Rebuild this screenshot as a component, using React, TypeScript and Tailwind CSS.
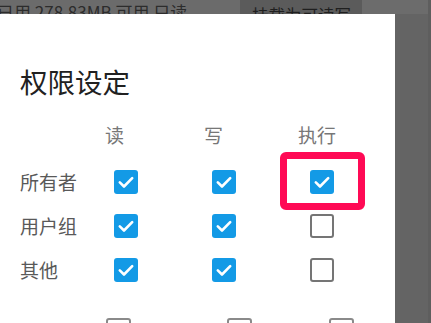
import React from 'react';

const font = { fontFamily: '"Noto Sans CJK SC", Roboto, "Noto Sans", sans-serif' };

function Check({ on }: { on: boolean }) {
  if (!on) {
    return <span className="block h-[24px] w-[24px] rounded-[3px] border-2 border-[#757575] bg-white" />;
  }
  return (
    <span className="flex h-[24px] w-[24px] items-center justify-center rounded-[3px] bg-[#139ae6]">
      <svg width="24" height="24" viewBox="0 0 24 24" fill="none">
        <path d="M5.8 12.4l4.2 4.1 8.2-8.4" stroke="#fff" strokeWidth="2.6" strokeLinecap="round" strokeLinejoin="round" />
      </svg>
    </span>
  );
}

const rows: { label: string; perms: boolean[] }[] = [
  { label: '所有者', perms: [true, true, true] },
  { label: '用户组', perms: [true, true, false] },
  { label: '其他', perms: [true, true, false] },
];

export default function App() {
  return (
    <div className="flex h-[323px] w-[431px] flex-col overflow-hidden bg-[#656565]" style={font}>
      {/* dimmed page behind the dialog */}
      <div className="flex h-[14px] shrink-0 overflow-hidden">
        <div className="flex w-[240px] bg-[#6b6b6b] pt-[2px]">
          <span className="-ml-[3px] whitespace-nowrap text-[17px] leading-[20px] text-[#2c2c2c]">已用 278.83MB 可用 只读</span>
        </div>
        <div className="w-[122px] bg-[#5b5b5b] pl-[12px] pt-[3px]">
          <span className="whitespace-nowrap text-[16.5px] leading-[20px] text-[#1f1f1f]">挂载为可读写</span>
        </div>
        <div className="w-[66px] bg-[#6c6c6c]" />
        <div className="flex-1 bg-[#5e5e5e]" />
      </div>

      <div className="flex flex-1">
        {/* dialog */}
        <div className="w-[395px] bg-white pl-[20px] pt-[50px]">
          <h2 className="text-[27.5px] leading-[34px] font-normal text-[#212121]">权限设定</h2>

          <div className="mt-[13px] grid grid-cols-[57px_98px_98px_98px]">
            <div className="h-[49px]" />
            <div className="flex h-[49px] items-center pl-[28px] text-[19px] text-[#777777]">读</div>
            <div className="flex h-[49px] items-center pl-[29px] text-[19px] text-[#777777]">写</div>
            <div className="flex h-[49px] items-center pl-[25px] text-[19px] text-[#777777]">执行</div>

            {rows.map((r, ri) => (
              <React.Fragment key={r.label}>
                <div className="flex h-[44px] items-center whitespace-nowrap text-[19px] text-[#595959]">{r.label}</div>
                {r.perms.map((p, pi) => (
                  <div key={pi} className="relative flex h-[44px] items-center justify-center">
                    <Check on={p} />
                    {ri === 0 && pi === 2 && (
                      <span className="absolute left-[7px] top-[-8px] h-[58px] w-[85px] rounded-[6px] border-[7px] border-[#ff0a55]" />
                    )}
                  </div>
                ))}
              </React.Fragment>
            ))}
          </div>

          {/* special bits row, mostly cut off */}
          <div className="mt-[26px] flex items-start text-[17px] leading-[24px] text-[#8a8a8a]">
            <span className="w-[86px] pt-[2px]">特殊</span>
            <span className="block h-[24px] w-[25px] rounded-[3px] border-2 border-[#8a8a8a]" />
            <span className="w-[96px]" />
            <span className="block h-[24px] w-[25px] rounded-[3px] border-2 border-[#8a8a8a]" />
            <span className="ml-[13px] w-[64px] pt-[2px]">SGID</span>
            <span className="block h-[24px] w-[25px] rounded-[3px] border-2 border-[#8a8a8a]" />
          </div>
        </div>
        <div className="w-[33px] bg-[#646464]" />
        <div className="flex-1 bg-[#5e5e5e]" />
      </div>
    </div>
  );
}
